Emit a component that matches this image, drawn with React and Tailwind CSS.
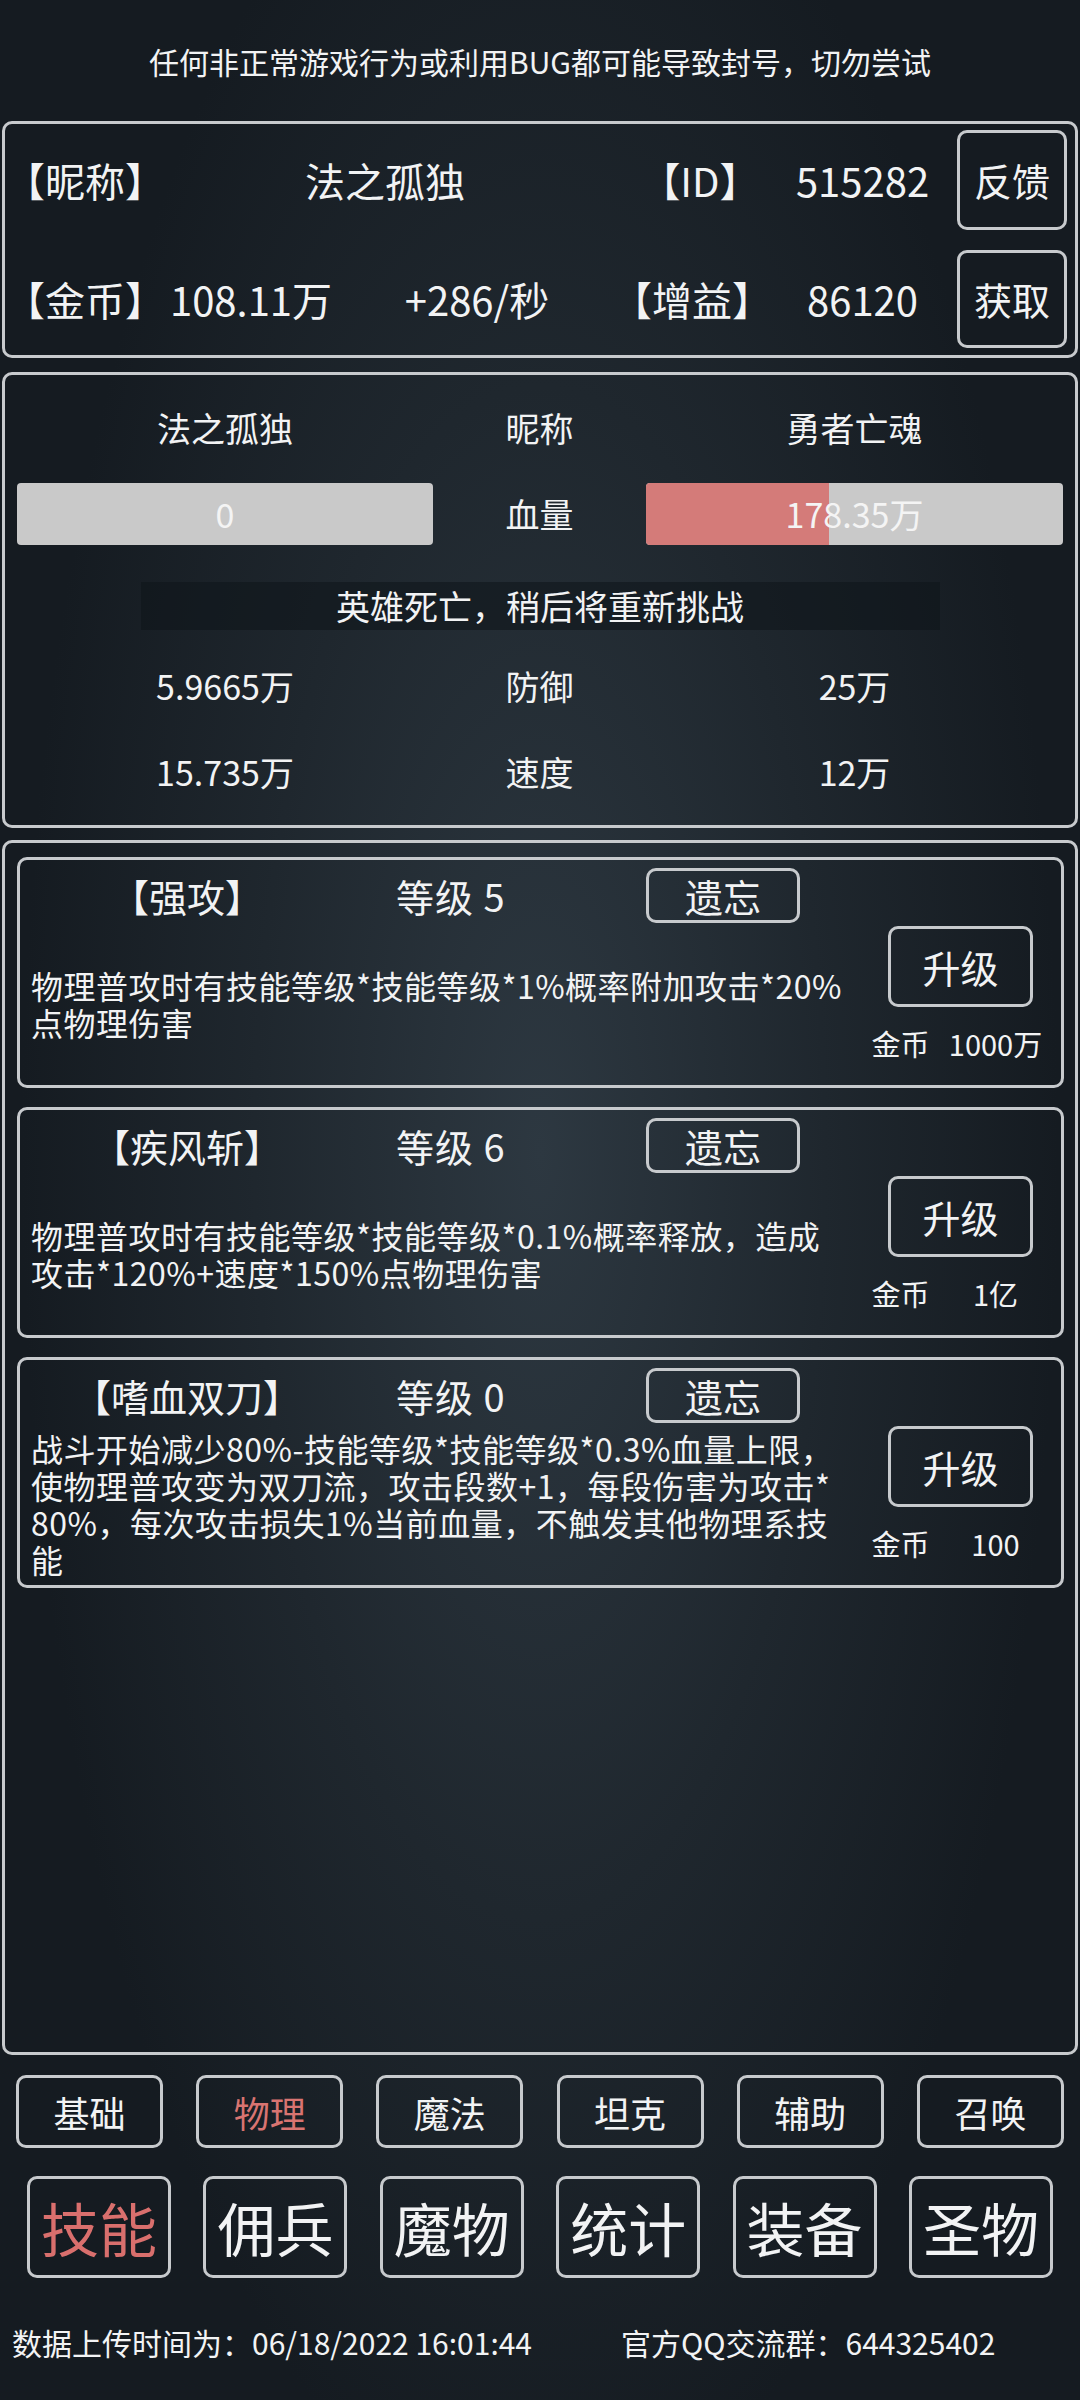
import React from "react";

const skills = [
  {
    name: "【强攻】",
    level: 5,
    cost: "1000万",
    lines: ["物理普攻时有技能等级*技能等级*1%概率附加攻击*20%", "点物理伤害"],
  },
  {
    name: "【疾风斩】",
    level: 6,
    cost: "1亿",
    lines: ["物理普攻时有技能等级*技能等级*0.1%概率释放，造成", "攻击*120%+速度*150%点物理伤害"],
  },
  {
    name: "【嗜血双刀】",
    level: 0,
    cost: "100",
    lines: [
      "战斗开始减少80%-技能等级*技能等级*0.3%血量上限，",
      "使物理普攻变为双刀流，攻击段数+1，每段伤害为攻击*",
      "80%，每次攻击损失1%当前血量，不触发其他物理系技",
      "能",
    ],
  },
];

const subTabs = ["基础", "物理", "魔法", "坦克", "辅助", "召唤"];
const mainTabs = ["技能", "佣兵", "魔物", "统计", "装备", "圣物"];

function SkillCard({ skill }) {
  return (
    <div className="flex h-[231px] rounded-[10px] border-[3px] border-[#c7cacd]">
      {/* left: title + description */}
      <div className="flex w-[840px] flex-col pt-[8px]">
        <div className="flex h-[55px] items-center">
          <div className="w-[334px] text-center text-[38px] leading-none">{skill.name}</div>
          <div className="w-[292px] pl-[42px] text-[38px] leading-none tracking-[1px]">
            等级&nbsp;{skill.level}
          </div>
          <button className="flex h-[55px] w-[154px] items-center justify-center rounded-[10px] border-[3px] border-[#c7cacd] text-[38px] leading-none">
            遗忘
          </button>
        </div>
        <div className="flex flex-1 flex-col justify-center pl-[11px]">
          {skill.lines.map((l) => (
            <div key={l} className="whitespace-nowrap text-[32px] leading-[37px] tracking-[0.5px]">
              {l}
            </div>
          ))}
        </div>
      </div>
      {/* right: upgrade */}
      <div className="flex flex-1 flex-col items-center pt-[66px]">
        <button className="flex h-[81px] w-[145px] items-center justify-center rounded-[10px] border-[3px] border-[#c7cacd] text-[38px] leading-none">
          升级
        </button>
        <div className="mt-[18px] flex h-[36px] items-center text-[29px] leading-none">
          <span className="w-[70px] text-center">金币</span>
          <span className="w-[120px] text-center">{skill.cost}</span>
        </div>
      </div>
    </div>
  );
}

export default function App() {
  return (
    <div className="h-[2400px] w-[1080px] overflow-hidden bg-[#161c22] bg-[radial-gradient(ellipse_48%_58%_at_50%_48%,#2d3841_0%,#1f272e_55%,#151b21_100%)] font-['Noto_Sans_CJK_SC','Noto_Sans',sans-serif] text-[#f2f3f4]">
      {/* warning */}
      <div className="flex h-[121px] items-center justify-center text-[30px] leading-none">
        任何非正常游戏行为或利用BUG都可能导致封号，切勿尝试
      </div>

      {/* player info */}
      <div className="mx-[2px] flex rounded-[10px] border-[3px] border-[#c7cacd] pt-[6px] pb-[7px]">
        <div className="flex w-[952px] flex-col gap-[20px]">
          <div className="flex h-[100px] items-center text-[40px] leading-none">
            <div className="w-[155px] text-center">【昵称】</div>
            <div className="w-[450px] text-center">法之孤独</div>
            <div className="w-[180px] text-center">【ID】</div>
            <div className="w-[145px] text-center">515282</div>
          </div>
          <div className="flex h-[98px] items-center text-[40px] leading-none">
            <div className="w-[155px] text-center">【金币】</div>
            <div className="w-[182px] text-center">108.11万</div>
            <div className="w-[270px] text-center">+286/秒</div>
            <div className="w-[156px] text-center">【增益】</div>
            <div className="w-[189px] text-center">86120</div>
          </div>
        </div>
        <div className="flex flex-col gap-[20px]">
          <button className="flex h-[100px] w-[110px] items-center justify-center rounded-[10px] border-[3px] border-[#c7cacd] text-[38px] leading-none">
            反馈
          </button>
          <button className="flex h-[98px] w-[110px] items-center justify-center rounded-[10px] border-[3px] border-[#c7cacd] text-[38px] leading-none">
            获取
          </button>
        </div>
      </div>

      {/* battle */}
      <div className="mx-[2px] mt-[14px] rounded-[10px] border-[3px] border-[#c7cacd] px-[12px] pt-[28px] pb-[28px] text-[34px] leading-none">
        <div className="grid h-[50px] grid-cols-[416px_213px_1fr] items-center text-center">
          <div>法之孤独</div>
          <div>昵称</div>
          <div>勇者亡魂</div>
        </div>
        <div className="mt-[30px] grid h-[62px] grid-cols-[416px_213px_1fr] items-center text-center">
          <div className="relative flex h-[62px] items-center justify-center overflow-hidden rounded-[4px] bg-[#c9c9c9]">
            <span className="relative text-[#f4f4f4]">0</span>
          </div>
          <div>血量</div>
          <div className="relative flex h-[62px] items-center justify-center overflow-hidden rounded-[4px] bg-[#c9c9c9]">
            <div className="absolute inset-y-0 left-0 w-[44%] bg-[#d47b79]" />
            <span className="relative text-[#f4f4f4]">178.35万</span>
          </div>
        </div>
        <div className="mx-auto mt-[37px] flex h-[48px] w-[799px] items-center justify-center bg-[#0f151a]/60">
          英雄死亡，稍后将重新挑战
        </div>
        <div className="mt-[31px] grid h-[50px] grid-cols-[416px_213px_1fr] items-center text-center">
          <div>5.9665万</div>
          <div>防御</div>
          <div>25万</div>
        </div>
        <div className="mt-[36px] grid h-[50px] grid-cols-[416px_213px_1fr] items-center text-center">
          <div>15.735万</div>
          <div>速度</div>
          <div>12万</div>
        </div>
      </div>

      {/* skills */}
      <div className="mx-[2px] mt-[12px] flex h-[1215px] flex-col gap-[19px] rounded-[10px] border-[3px] border-[#c7cacd] pt-[14px] pr-[11px] pl-[12px]">
        {skills.map((s) => (
          <SkillCard key={s.name} skill={s} />
        ))}
      </div>

      {/* sub tabs */}
      <div className="mt-[20px] flex justify-between px-[16px]">
        {subTabs.map((t) => (
          <button
            key={t}
            className={`flex h-[73px] w-[147px] items-center justify-center rounded-[10px] border-[3px] border-[#c7cacd] text-[36px] leading-none ${
              t === "物理" ? "text-[#d97471]" : ""
            }`}
          >
            {t}
          </button>
        ))}
      </div>

      {/* main tabs */}
      <div className="mt-[28px] flex justify-between px-[27px]">
        {mainTabs.map((t) => (
          <button
            key={t}
            className={`flex h-[102px] w-[144px] items-center justify-center rounded-[10px] border-[3px] border-[#c7cacd] text-[58px] leading-none ${
              t === "技能" ? "text-[#d96f6d]" : ""
            }`}
          >
            {t}
          </button>
        ))}
      </div>

      {/* footer */}
      <div className="mt-[44px] flex h-[40px] items-center text-[30px] leading-none">
        <span className="w-[621px] pl-[12px]">数据上传时间为：06/18/2022 16:01:44</span>
        <span>官方QQ交流群：644325402</span>
      </div>
    </div>
  );
}
